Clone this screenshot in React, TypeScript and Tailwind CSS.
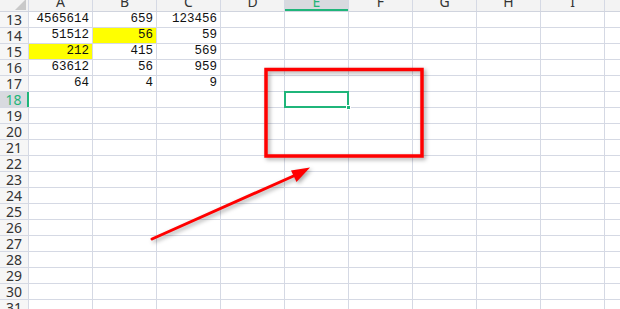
import React from "react";

const COLS = ["A", "B", "C", "D", "E", "F", "G", "H", "I", "J"];

const DATA: Record<number, (string | null)[]> = {
  13: ["4565614", "659", "123456"],
  14: ["51512", "56", "59"],
  15: ["212", "415", "569"],
  16: ["63612", "56", "959"],
  17: ["64", "4", "9"],
};

const YELLOW: Record<string, boolean> = { "14-1": true, "15-0": true };

const rows = Array.from({ length: 19 }, (_, i) => 13 + i);

const Cell = ({ row, col }: { row: number; col: number }) => {
  const value = DATA[row]?.[col] ?? null;
  const yellow = YELLOW[`${row}-${col}`];
  const selected = row === 18 && col === 4;
  return (
    <div
      className={`relative w-[64px] shrink-0 h-full border-r border-[#d5d9e4] flex items-center justify-end pr-[3px] text-[12.5px] leading-[15px] text-[#111] ${
        yellow ? "bg-[#ffff00]" : "bg-white"
      }`}
      style={{ fontFamily: '"Liberation Mono", "DejaVu Sans Mono", monospace' }}
    >
      {value}
      {selected && (
        <div className="absolute left-[-1px] top-[-1px] right-[-1px] bottom-[-1px] border-2 border-[#1fb57a] z-10">
          <div className="absolute right-[-4px] bottom-[-4px] w-[5px] h-[5px] bg-[#1fb57a] border border-white" />
        </div>
      )}
    </div>
  );
};

export default function App() {
  return (
    <div
      className="relative w-[620px] h-[309px] overflow-hidden bg-white"
      style={{ fontFamily: '"Noto Sans", "Liberation Sans", sans-serif' }}
    >
      {/* column header */}
      <div className="flex h-[12px] border-b border-[#d0d4de] bg-[#f3f3f3]">
        <div className="relative w-[29px] shrink-0 border-r border-[#d5d9e4]">
          <svg className="absolute right-[2px] bottom-[1px]" width="11" height="11" viewBox="0 0 11 11">
            <polygon points="11,0 11,11 0,11" fill="#c9c9c9" />
          </svg>
        </div>
        {COLS.map((c) => (
          <div
            key={c}
            className={`relative w-[64px] shrink-0 border-r border-[#d5d9e4] overflow-hidden flex justify-center ${
              c === "E" ? "bg-[#d8dadf] text-[#1fb57a]" : "text-[#333]"
            }`}
          >
            <span className="text-[14px] leading-[14px] mt-[-5px]">{c}</span>
            {c === "E" && <div className="absolute left-0 right-0 bottom-0 h-[2px] bg-[#1fb57a]" />}
          </div>
        ))}
      </div>

      {/* rows */}
      {rows.map((r) => (
        <div key={r} className="flex h-[16px] border-b border-[#d5d9e4]">
          <div
            className={`w-[29px] shrink-0 flex items-center justify-center text-[14px] leading-[15px] ${
              r === 18
                ? "bg-[#d8dadf] text-[#1fb57a] border-r-2 border-[#1fb57a]"
                : "bg-[#f6f6f6] text-[#333] border-r border-[#d5d9e4]"
            }`}
          >
            {r}
          </div>
          {COLS.map((c, ci) => (
            <Cell key={c} row={r} col={ci} />
          ))}
        </div>
      ))}

      {/* annotation */}
      <svg
        className="absolute left-0 top-0 pointer-events-none drop-shadow-[2px_2px_2px_rgba(0,0,0,0.35)]"
        width="620"
        height="309"
        viewBox="0 0 620 309"
      >
        <rect x="266" y="69.5" width="156" height="86.5" fill="none" stroke="#ff0000" strokeWidth="3.5" />
        <line x1="152" y1="239" x2="298" y2="174" stroke="#ff0000" strokeWidth="3" strokeLinecap="round" />
        <polygon points="310,167.5 291,170.5 296.5,182" fill="#ff0000" />
      </svg>
    </div>
  );
}
